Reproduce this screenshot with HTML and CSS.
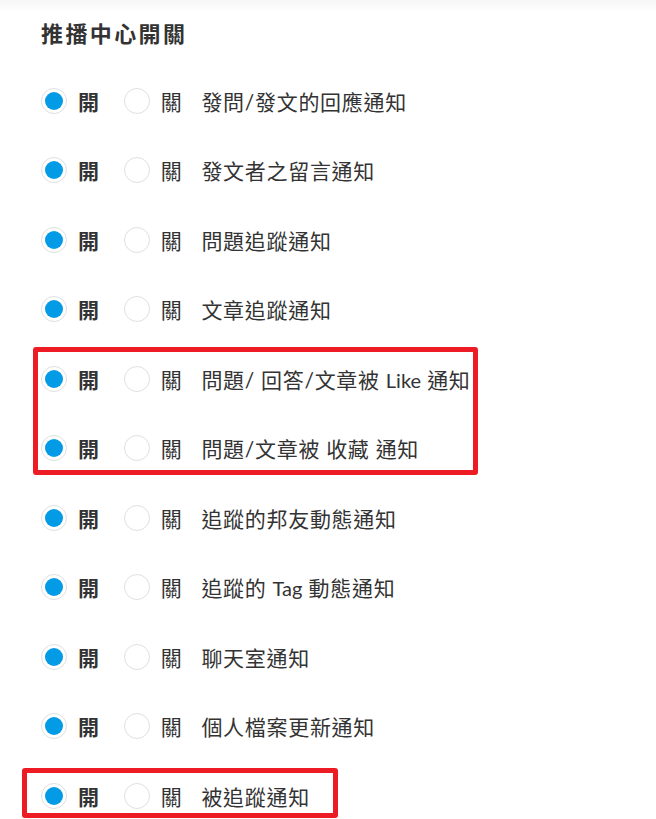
FILE: index.html
```html
<!DOCTYPE html>
<html lang="zh-Hant">
<head>
  <meta charset="UTF-8" />
  <meta name="viewport" content="width=device-width, initial-scale=1" />
  <title>推播中心開關</title>
  <link rel="stylesheet" href="styles.css">
</head>
<body>
  <div class="page">
    <h2 class="title">推播中心開關</h2>

    <div class="list">
      <div class="row">
        <label class="choice on"><span class="radio checked"></span>開</label>
        <label class="choice off"><span class="radio"></span>關</label>
        <span class="name">發問/發文的回應通知</span>
      </div>
      <div class="row">
        <label class="choice on"><span class="radio checked"></span>開</label>
        <label class="choice off"><span class="radio"></span>關</label>
        <span class="name">發文者之留言通知</span>
      </div>
      <div class="row">
        <label class="choice on"><span class="radio checked"></span>開</label>
        <label class="choice off"><span class="radio"></span>關</label>
        <span class="name">問題追蹤通知</span>
      </div>
      <div class="row">
        <label class="choice on"><span class="radio checked"></span>開</label>
        <label class="choice off"><span class="radio"></span>關</label>
        <span class="name">文章追蹤通知</span>
      </div>
      <div class="row">
        <label class="choice on"><span class="radio checked"></span>開</label>
        <label class="choice off"><span class="radio"></span>關</label>
        <span class="name">問題/ 回答/文章被 <span class="latin">Like</span> 通知</span>
      </div>
      <div class="row">
        <label class="choice on"><span class="radio checked"></span>開</label>
        <label class="choice off"><span class="radio"></span>關</label>
        <span class="name">問題/文章被 收藏 通知</span>
      </div>
      <div class="row">
        <label class="choice on"><span class="radio checked"></span>開</label>
        <label class="choice off"><span class="radio"></span>關</label>
        <span class="name">追蹤的邦友動態通知</span>
      </div>
      <div class="row">
        <label class="choice on"><span class="radio checked"></span>開</label>
        <label class="choice off"><span class="radio"></span>關</label>
        <span class="name">追蹤的 <span class="latin">Tag</span> 動態通知</span>
      </div>
      <div class="row">
        <label class="choice on"><span class="radio checked"></span>開</label>
        <label class="choice off"><span class="radio"></span>關</label>
        <span class="name">聊天室通知</span>
      </div>
      <div class="row">
        <label class="choice on"><span class="radio checked"></span>開</label>
        <label class="choice off"><span class="radio"></span>關</label>
        <span class="name">個人檔案更新通知</span>
      </div>
      <div class="row">
        <label class="choice on"><span class="radio checked"></span>開</label>
        <label class="choice off"><span class="radio"></span>關</label>
        <span class="name">被追蹤通知</span>
      </div>
    </div>

    <!-- annotation boxes -->
    <div class="mark mark-like"></div>
    <div class="mark mark-follow"></div>
  </div>
</body>
</html>
```

FILE: styles.css
```css
* {
  margin: 0;
  padding: 0;
  box-sizing: border-box;
}

body {
  font-family: Lato, 'Noto Sans CJK TC', sans-serif;
  background: #fff;
  color: #333;
  height: 819px;
  overflow: hidden;
}

.page {
  position: relative;
  height: 819px;
  padding: 19px 0 0 41px;
  background: linear-gradient(180deg, #f6f6f6 0px, #fff 12px);
}

.title {
  font-size: 22px;
  font-weight: 700;
  letter-spacing: 2.4px;
  line-height: 30px;
  height: 30px;
  color: #333;
}

.list {
  margin-top: 17px;
}

.row {
  display: flex;
  align-items: center;
  height: 69.5px;
  font-size: 21px;
  letter-spacing: 0.7px;
}

.choice {
  display: flex;
  align-items: center;
  gap: 11px;
  cursor: pointer;
}

.choice.on {
  font-weight: 700;
  margin-right: 24px;
}

.choice.off {
  margin-right: 19px;
}

.radio {
  width: 26px;
  height: 26px;
  border-radius: 50%;
  border: 1px solid #e0e0e0;
  background: #fff;
  display: flex;
  align-items: center;
  justify-content: center;
}

.radio.checked::after {
  content: '';
  width: 18px;
  height: 18px;
  border-radius: 50%;
  background: #039be5;
}

.name {
  color: #333;
}

.latin {
  font-size: 20px;
  letter-spacing: 0;
}

.mark {
  position: absolute;
  border: 5px solid #ed1c24;
  border-radius: 3px;
}

.mark-like {
  left: 33px;
  top: 347px;
  width: 445px;
  height: 128px;
}

.mark-follow {
  left: 22px;
  top: 768px;
  width: 316px;
  height: 50px;
}
```
